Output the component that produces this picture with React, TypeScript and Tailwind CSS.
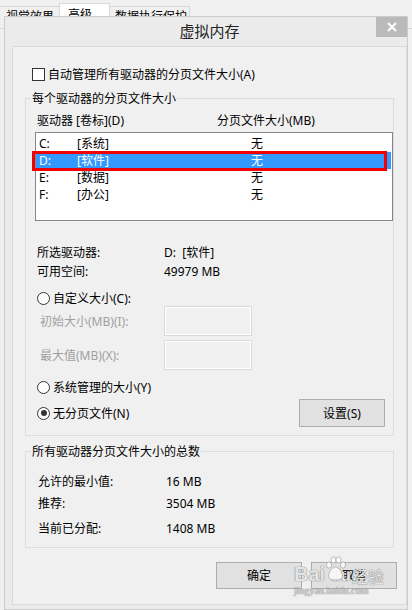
import type { ReactNode } from "react";

const drives = [
  { letter: "C:", label: "[系统]", size: "无" },
  { letter: "D:", label: "[软件]", size: "无", selected: true },
  { letter: "E:", label: "[数据]", size: "无" },
  { letter: "F:", label: "[办公]", size: "无" },
];

function Radio({ checked, label }: { checked?: boolean; label: string }) {
  return (
    <div className="flex items-center h-[18px] pl-[11px]">
      <span className="w-[13px] h-[13px] rounded-full border border-[#333] bg-white flex items-center justify-center">
        {checked && <span className="w-[6px] h-[6px] rounded-full bg-[#333]" />}
      </span>
      <span className="ml-[3px]">{label}</span>
    </div>
  );
}

function WinButton({ children, className = "" }: { children: ReactNode; className?: string }) {
  return (
    <div
      className={`w-[86px] border border-[#adadad] bg-[#e1e1e1] flex items-center justify-center ${className}`}
    >
      {children}
    </div>
  );
}

function SizeInput({ label }: { label: string }) {
  return (
    <div className="flex items-center pl-[14px] h-[30px]">
      <span className="w-[124px] text-[#a0a0a0]">{label}</span>
      <span className="w-[88px] h-[30px] border border-[#d9d9d9] bg-[#f0f0f0] shadow-[inset_0_0_0_1px_#ffffff]" />
    </div>
  );
}

export default function App() {
  return (
    <div className="relative w-[412px] h-[610px] overflow-hidden bg-[#f0f0f0] text-[12px] leading-[17px] text-black font-['Noto_Sans','Noto_Sans_CJK_SC',sans-serif]">
      {/* background window tabs */}
      <div className="flex items-end h-[29px] border-b border-[#d9d9d9] -ml-[9px]">
        <div className="h-[22px] pl-[14px] pr-[5px] border border-b-0 border-[#d9d9d9] pt-[1px]">视觉效果</div>
        <div className="h-[25px] w-[51px] pl-[8px] bg-white border border-b-0 border-[#d9d9d9] -mx-[1px] pt-[2px]">高级</div>
        <div className="h-[22px] pl-[5px] pr-[2px] border border-b-0 border-[#d9d9d9] pt-[1px]">数据执行保护</div>
      </div>

      {/* dialog */}
      <div className="absolute left-[4px] top-[16px] w-[404px] h-[594px] bg-[#ebebeb] border border-[#cccccc] pl-[7px]">
        <div className="relative h-[29px] flex items-center justify-center text-[15px] text-[#222]">
          虚拟内存
          <div className="absolute right-0 top-0 w-[31px] h-[20px] bg-[#bababa] flex items-center justify-center">
            <svg width="10" height="10" viewBox="0 0 10 10" stroke="#fff" strokeWidth="2">
              <path d="M1 1l8 8M9 1l-8 8" />
            </svg>
          </div>
        </div>

        <div className="h-[559px] border border-[#dadada] bg-[#f0f0f0] pt-[18px]">
          <div className="flex items-center h-[18px] pl-[19px]">
            <span className="w-[13px] h-[13px] border border-[#333] bg-white" />
            <span className="ml-[3px]">自动管理所有驱动器的分页文件大小(A)</span>
          </div>

          {/* per-drive group */}
          <fieldset className="mx-[12px] mt-[7px] border border-[#dcdcdc] pb-[8px]">
            <legend className="ml-[5px] px-[1px]">每个驱动器的分页文件大小</legend>
            <div className="flex items-center h-[18px] mt-[4px] pl-[11px]">
              <span className="w-[180px]">驱动器 [卷标](D)</span>
              <span>分页文件大小(MB)</span>
            </div>
            <div className="ml-[9px] mt-[3px] h-[89px] border border-[#828790] bg-white pt-[2px]">
              {drives.map((d) => (
                <div
                  key={d.letter}
                  className={`flex items-center h-[17px] pl-[3px] mr-[1px] ${
                    d.selected ? "bg-[#3399ff] text-white" : ""
                  }`}
                >
                  <span className="w-[38px]">{d.letter}</span>
                  <span className="w-[174px]">{d.label}</span>
                  <span>{d.size}</span>
                </div>
              ))}
            </div>

            <div className="mt-[22px] pl-[11px]">
              <div className="flex items-center h-[19px]">
                <span className="w-[127px]">所选驱动器:</span>
                <span>D:&nbsp;&nbsp;[软件]</span>
              </div>
              <div className="flex items-center h-[19px]">
                <span className="w-[127px]">可用空间:</span>
                <span>49979 MB</span>
              </div>
            </div>

            <div className="mt-[8px]">
              <Radio label="自定义大小(C):" />
            </div>
            <div className="-mt-[1px]">
              <SizeInput label="初始大小(MB)(I):" />
            </div>
            <div className="mt-[4px]">
              <SizeInput label="最大值(MB)(X):" />
            </div>
            <div className="mt-[8px]">
              <Radio label="系统管理的大小(Y)" />
            </div>
            <div className="mt-[3px] flex items-center h-[28px]">
              <Radio checked label="无分页文件(N)" />
              <WinButton className="ml-auto mr-[8px] h-[28px]">设置(S)</WinButton>
            </div>
          </fieldset>

          {/* totals group */}
          <fieldset className="mx-[12px] mt-[7px] border border-[#dcdcdc] pb-[9px]">
            <legend className="ml-[5px] px-[1px]">所有驱动器分页文件大小的总数</legend>
            <div className="pl-[12px]">
              <div className="flex items-center h-[20px] mt-[11px]">
                <span className="w-[128px]">允许的最小值:</span>
                <span>16 MB</span>
              </div>
              <div className="flex items-center h-[20px] mt-[2px]">
                <span className="w-[128px]">推荐:</span>
                <span>3504 MB</span>
              </div>
              <div className="flex items-center h-[20px] mt-[5px]">
                <span className="w-[128px]">当前已分配:</span>
                <span>1408 MB</span>
              </div>
            </div>
          </fieldset>

          <div className="mt-[14px] flex justify-end gap-[9px] pr-[9px]">
            <WinButton className="h-[27px]">确定</WinButton>
            <WinButton className="h-[27px]">取消</WinButton>
          </div>
        </div>
      </div>

      {/* red annotation around the selected drive */}
      <div className="absolute left-[32px] top-[151px] w-[355px] h-[20px] border-[3px] border-[#f00000]" />

      {/* watermark */}
      <div className="absolute left-[294px] top-[553px] pointer-events-none select-none text-white/80 [text-shadow:0_0_1px_#7a7a7a,0_0_1px_#7a7a7a]">
        <div className="relative flex items-end h-[31px] leading-none">
          <span className="text-[20px] font-bold font-['Liberation_Sans',sans-serif]">Bai</span>
          <svg width="21" height="26" viewBox="0 0 21 26" className="mb-[2px] opacity-80">
            <g fill="#ffffff" stroke="#9a9a9a" strokeWidth="0.8">
              <ellipse cx="4" cy="9" rx="2.6" ry="3.2" />
              <ellipse cx="8.5" cy="4" rx="2.6" ry="3.2" />
              <ellipse cx="13.5" cy="4" rx="2.6" ry="3.2" />
              <ellipse cx="18" cy="9" rx="2.6" ry="3.2" />
              <path d="M10.5 11c-3 0-7 5-7 9 0 3 3 4 7 4s7-1 7-4c0-4-4-9-7-9z" />
            </g>
          </svg>
          <span className="-ml-[16px] text-[17px] font-bold font-['Liberation_Sans',sans-serif]">du</span>
          <span className="ml-[1px] text-[16px] font-['Noto_Sans_CJK_SC',sans-serif]">经验</span>
        </div>
        <div className="text-[10px] leading-[12px] mt-[1px] font-['Liberation_Serif',serif] text-white/70">jingyan.baidu.com</div>
      </div>
    </div>
  );
}
